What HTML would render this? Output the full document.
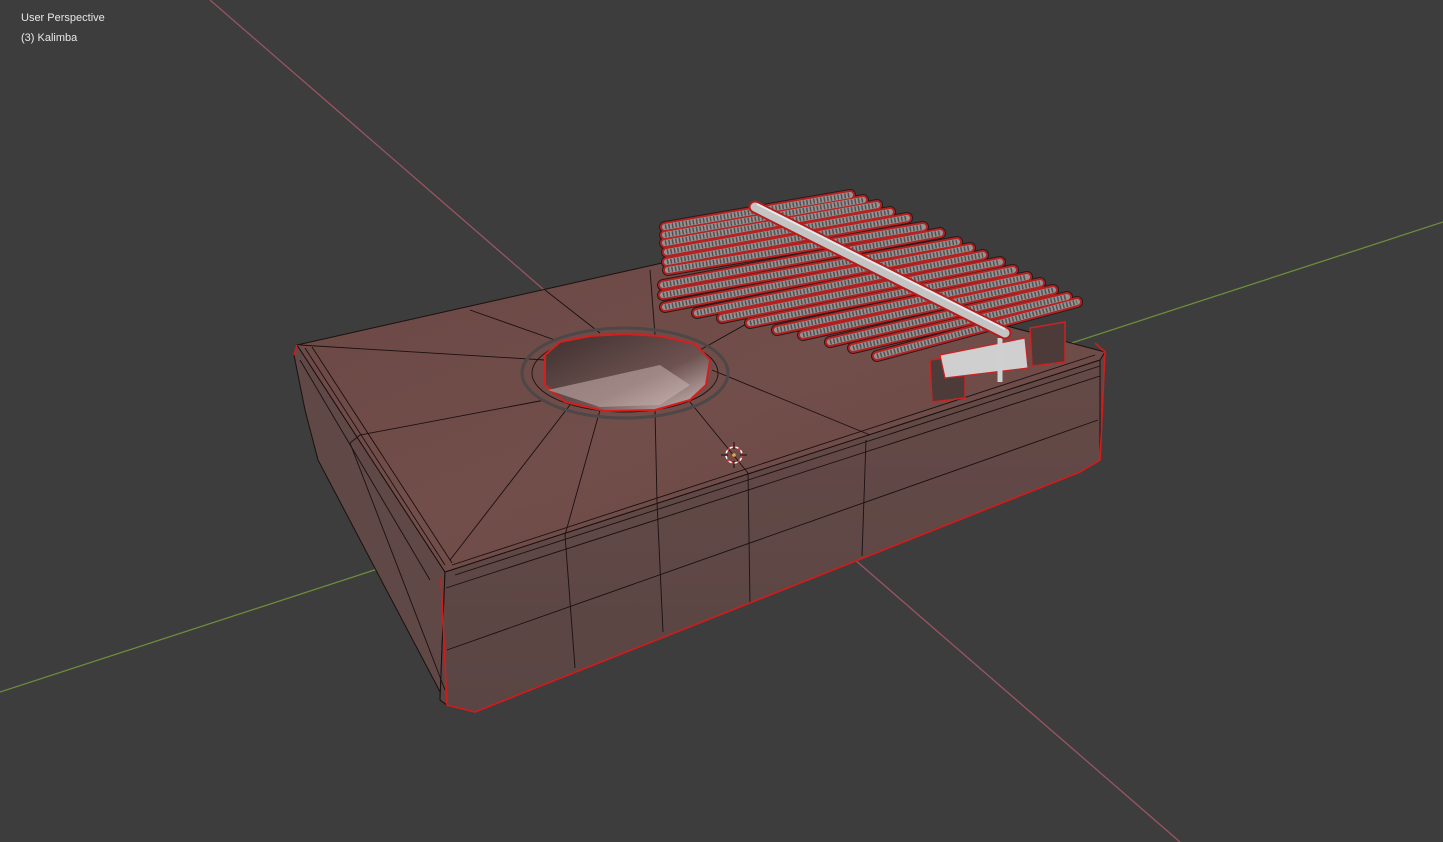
<!DOCTYPE html>
<html><head><meta charset="utf-8"><style>
html,body{margin:0;padding:0;background:#3d3d3d;width:1443px;height:842px;overflow:hidden}
.t{position:absolute;left:21px;color:#e8e8e8;font:11px "Liberation Sans",sans-serif}
</style></head><body>
<svg width="1443" height="842" style="position:absolute;left:0;top:0">
<defs>
<linearGradient id="top" x1="0" y1="0" x2="1" y2="1"><stop offset="0" stop-color="#6a4845"/><stop offset="0.5" stop-color="#724e4a"/><stop offset="1" stop-color="#664643"/></linearGradient>
<linearGradient id="front" x1="0" y1="0" x2="0" y2="1"><stop offset="0" stop-color="#654a47"/><stop offset="1" stop-color="#594543"/></linearGradient>
<linearGradient id="hole" x1="0" y1="0" x2="1" y2="1"><stop offset="0" stop-color="#3e302e"/><stop offset="0.6" stop-color="#6d5250"/><stop offset="1" stop-color="#d6c4c2"/></linearGradient>
<g id="tl">
<line x1="665" y1="227" x2="850" y2="195"/><line x1="665" y1="235" x2="863" y2="200"/><line x1="665" y1="243" x2="877" y2="205"/><line x1="667" y1="252" x2="890" y2="212"/><line x1="667" y1="262" x2="907" y2="218"/><line x1="668" y1="270" x2="923" y2="227"/><line x1="663" y1="285" x2="940" y2="233"/><line x1="663" y1="295" x2="957" y2="242"/><line x1="665" y1="307" x2="970" y2="248"/><line x1="697" y1="313" x2="983" y2="255"/><line x1="722" y1="318" x2="1000" y2="262"/><line x1="750" y1="323" x2="1013" y2="270"/><line x1="777" y1="330" x2="1027" y2="277"/><line x1="803" y1="335" x2="1040" y2="283"/><line x1="830" y1="342" x2="1053" y2="290"/><line x1="853" y1="348" x2="1067" y2="297"/><line x1="877" y1="356" x2="1077" y2="302"/>
</g>
</defs>
<line x1="210" y1="0" x2="1180" y2="842" stroke="#9a5563" stroke-width="1.3"/>
<line x1="0" y1="692" x2="1443" y2="222" stroke="#6c8c3c" stroke-width="1.3"/>
<polygon points="297,345 294,355 305,410 318,460 447,705 475,712 1080,472 1100,460 1105,352 720,250" fill="#5e4644"/>
<polygon points="297,345 445,572 440,700 447,705 318,460 305,410 294,355" fill="#5f4846" stroke="#1a1010" stroke-width="1"/>
<polygon points="445,572 1100,360 1100,460 1080,472 475,712 447,705 440,700" fill="url(#front)" stroke="#1a1010" stroke-width="1"/>
<polygon points="297,345 720,250 1105,352 1100,360 445,572" fill="url(#top)" stroke="#1a1010" stroke-width="1"/>
<g stroke="#1a1010" stroke-width="0.9" fill="none">
<line x1="305" y1="348" x2="445" y2="565"/>
<line x1="312" y1="347" x2="452" y2="563"/>
<line x1="300" y1="360" x2="430" y2="580"/>
<polyline points="350,443 360,435 545,400"/>
<line x1="452" y1="565" x2="1095" y2="355"/>
<line x1="455" y1="575" x2="1100" y2="366"/>
<line x1="446" y1="588" x2="1100" y2="376"/>
<line x1="447" y1="650" x2="1098" y2="420"/>
<line x1="350" y1="443" x2="445" y2="690"/>
<line x1="565" y1="535" x2="575" y2="668"/>
<line x1="657" y1="502" x2="663" y2="632"/>
<line x1="748" y1="473" x2="750" y2="604"/>
<line x1="866" y1="440" x2="862" y2="556"/>
<line x1="545" y1="360" x2="300" y2="345"/>
<line x1="555" y1="340" x2="470" y2="310"/>
<line x1="600" y1="333" x2="545" y2="290"/>
<line x1="655" y1="335" x2="650" y2="270"/>
<line x1="700" y1="350" x2="780" y2="305"/>
<line x1="712" y1="370" x2="870" y2="435"/>
<line x1="690" y1="402" x2="748" y2="473"/>
<line x1="655" y1="410" x2="657" y2="502"/>
<line x1="600" y1="410" x2="565" y2="535"/>
<line x1="570" y1="405" x2="450" y2="560"/>
</g>
<ellipse cx="625" cy="373" rx="103" ry="45" fill="none" stroke="#4d4747" stroke-width="3"/>
<ellipse cx="625" cy="373" rx="93" ry="39" fill="none" stroke="#241818" stroke-width="1"/>
<polygon points="545,355 560,342 590,336 625,334 660,336 695,344 710,360 706,385 690,400 655,410 605,411 565,402 545,385" fill="url(#hole)" stroke="#d41f1f" stroke-width="2"/>
<polygon points="548,390 660,365 690,385 660,405 600,407" fill="#c9b3b1" opacity="0.55"/>
<polygon points="930,360 965,355 965,398 932,402" fill="#4d3b39" stroke="#c22" stroke-width="1.5"/>
<polygon points="1030,328 1065,322 1065,362 1032,366" fill="#4d3b39" stroke="#c22" stroke-width="1.5"/>
<polygon points="940,355 1025,338 1028,368 945,378" fill="#cfcfcf" stroke="#c22" stroke-width="1.2"/>
<line x1="1000" y1="338" x2="1000" y2="382" stroke="#d0d0d0" stroke-width="5"/>
<g stroke-linecap="round" fill="none">
<use href="#tl" stroke="#2a1a1a" stroke-width="12"/>
<use href="#tl" stroke="#b52222" stroke-width="10"/>
<use href="#tl" stroke="#959393" stroke-width="6"/>
<use href="#tl" stroke="#555050" stroke-width="5" stroke-dasharray="1.5 2" stroke-linecap="butt"/>
</g>
<line x1="755" y1="207" x2="1005" y2="333" stroke="#b51c1c" stroke-width="13" stroke-linecap="round"/>
<line x1="755" y1="207" x2="1005" y2="333" stroke="#c4c4c4" stroke-width="9" stroke-linecap="round"/>
<line x1="757" y1="204" x2="1005" y2="329" stroke="#e8e8e8" stroke-width="2"/>
<g stroke="#d21c1c" stroke-width="1.6" fill="none">
<polyline points="297,345 294,355"/>
<polyline points="441,578 447,705 475,712 1080,472 1100,460 1105,352 1095,343"/>
</g>
<circle cx="734" cy="455" r="8" fill="none" stroke="#e33" stroke-width="1.5" stroke-dasharray="3 3"/>
<circle cx="734" cy="455" r="8" fill="none" stroke="#fff" stroke-width="1.5" stroke-dasharray="3 3" stroke-dashoffset="3"/>
<g stroke="#111" stroke-width="1"><line x1="721" y1="455" x2="728" y2="455"/><line x1="740" y1="455" x2="747" y2="455"/><line x1="734" y1="442" x2="734" y2="449"/><line x1="734" y1="461" x2="734" y2="468"/></g>
<circle cx="734" cy="455" r="1.8" fill="#f0a040"/>
</svg>
<div class="t" style="top:12px">User Perspective</div>
<div class="t" style="top:32px">(3) Kalimba</div>
</body></html>
